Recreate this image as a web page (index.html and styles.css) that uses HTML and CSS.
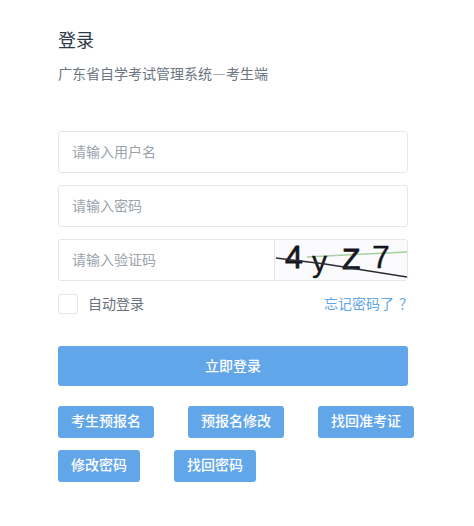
FILE: index.html
```html
<!DOCTYPE html>
<html lang="zh-CN">
<head>
    <meta charset="UTF-8">
    <title>登录</title>
    <link rel="stylesheet" href="styles.css">
</head>
<body>
<div class="login">
    <h1 class="title">登录</h1>
    <p class="subtitle">广东省自学考试管理系统—考生端</p>

    <form class="form">
        <div class="field"><input class="input" type="text" placeholder="请输入用户名"></div>
        <div class="field"><input class="input" type="password" placeholder="请输入密码"></div>
        <div class="field field-code">
            <input class="input" type="text" placeholder="请输入验证码">
            <svg class="captcha" width="132" height="40" viewBox="0 0 132 40">
                <path d="M32 17 L70 15 L132 12" fill="none" stroke="#a6cfa2" stroke-width="1.5"/>
                <text class="captcha-char" x="10" y="28" font-size="32">4</text>
                <text class="captcha-char captcha-thin" x="37" y="32" font-size="30">y</text>
                <text class="captcha-char" x="67" y="29" font-size="30">Z</text>
                <text class="captcha-char captcha-thin" x="97" y="28" font-size="32">7</text>
                <path d="M1 18 L50 24 L132 37" fill="none" stroke="#2a2a35" stroke-width="1.5"/>
            </svg>
        </div>
        <div class="options">
            <label class="remember"><span class="checkbox"></span>自动登录</label>
            <a class="forgot" href="#">忘记密码了<span class="forgot-mark">？</span></a>
        </div>
        <button class="submit" type="button">立即登录</button>
    </form>

    <div class="links">
        <a class="link-btn" href="#">考生预报名</a>
        <a class="link-btn" href="#">预报名修改</a>
        <a class="link-btn" href="#">找回准考证</a>
        <a class="link-btn" href="#">修改密码</a>
        <a class="link-btn" href="#">找回密码</a>
    </div>
</div>
</body>
</html>
```

FILE: styles.css
```css
* {
    box-sizing: border-box;
}
body {
    margin: 0;
    background: #fff;
    font-family: "Noto Sans CJK SC", "Liberation Sans", sans-serif;
    font-size: 14px;
    color: #606d7b;
}
.login {
    width: 350px;
    margin-left: 58px;
    padding-top: 27px;
}
.title {
    margin: 0;
    font-size: 18px;
    font-weight: normal;
    line-height: 24px;
    color: #2c3a47;
}
.subtitle {
    margin: 12px 0 0;
    line-height: 20px;
    color: #6b7580;
}
.form {
    margin-top: 48px;
}
.field {
    margin-bottom: 12px;
}
.input {
    display: block;
    width: 100%;
    height: 42px;
    padding: 0 13px 2px;
    border: 1px solid #e6e6e6;
    border-radius: 3px;
    outline: none;
    font: inherit;
    color: #333;
}
.input::placeholder {
    color: #9aa3ac;
    opacity: 1;
}
.field-code {
    display: flex;
    align-items: center;
    border: 1px solid #e6e6e6;
    border-radius: 3px;
    height: 42px;
}
.field-code .input {
    flex: 1;
    min-width: 0;
    height: 40px;
    border: none;
    border-right: 1px solid #e6e6e6;
    border-radius: 0;
}
.captcha {
    flex: none;
    display: block;
    background: #fbfbfe;
}
.captcha-char {
    font-family: "Liberation Sans", sans-serif;
    fill: #15151c;
    stroke: #15151c;
    stroke-width: 0.8;
}
.captcha-thin {
    stroke-width: 0.3;
}
.options {
    display: flex;
    justify-content: space-between;
    align-items: flex-start;
    height: 20px;
    margin-top: 13px;
    line-height: 18px;
}
.remember {
    display: flex;
    align-items: flex-start;
    color: #67717c;
}
.checkbox {
    width: 20px;
    height: 20px;
    margin-right: 10px;
    border: 1px solid #e6e6e6;
    border-radius: 3px;
}
.forgot {
    color: #5fa5e8;
    text-decoration: none;
    white-space: nowrap;
}
.forgot-mark {
    padding-left: 5px;
    margin-right: -5px;
}
.submit {
    display: block;
    width: 100%;
    height: 40px;
    margin-top: 32px;
    padding: 0 0 3px;
    border: none;
    border-radius: 3px;
    background: #62a6ea;
    color: #fff;
    font: inherit;
    font-weight: 500;
    cursor: pointer;
}
.links {
    display: flex;
    flex-wrap: wrap;
    gap: 12px 34px;
    width: 380px;
    margin-top: 20px;
}
.link-btn {
    height: 32px;
    padding: 0 13px;
    border-radius: 3px;
    background: #62a6ea;
    color: #fff;
    font-weight: 500;
    line-height: 28px;
    text-decoration: none;
}
```
